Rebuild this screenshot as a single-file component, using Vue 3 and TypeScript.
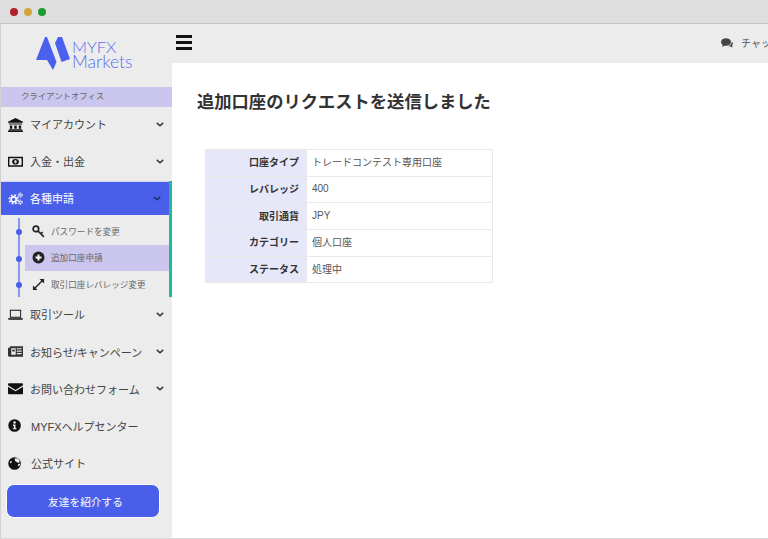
<script setup lang="ts">
interface MenuItem { label: string; icon: string; chevron: boolean; pad?: boolean }
const top: MenuItem[] = [
  { label: 'マイアカウント', icon: 'bank', chevron: true },
  { label: '入金・出金', icon: 'money', chevron: true },
]
const bottom: MenuItem[] = [
  { label: '取引ツール', icon: 'laptop', chevron: true },
  { label: 'お知らせ/キャンペーン', icon: 'news', chevron: true },
  { label: 'お問い合わせフォーム', icon: 'mail', chevron: true },
  { label: 'MYFXヘルプセンター', icon: 'info', chevron: false, pad: true },
  { label: '公式サイト', icon: 'globe', chevron: false, pad: true },
]
const subs = [
  { label: 'パスワードを変更', icon: 'key', active: false },
  { label: '追加口座申請', icon: 'plus', active: true },
  { label: '取引口座レバレッジ変更', icon: 'expand', active: false },
]
const rows = [
  ['口座タイプ', 'トレードコンテスト専用口座'],
  ['レバレッジ', '400'],
  ['取引通貨', 'JPY'],
  ['カテゴリー', '個人口座'],
  ['ステータス', '処理中'],
]
</script>

<template>
  <div class="window">
    <header class="chrome">
      <span class="dot red"></span><span class="dot yellow"></span><span class="dot green"></span>
    </header>
    <div class="body">
      <aside class="side">
        <div class="logo">
          <svg class="mark" width="34" height="35" viewBox="0 0 34 35">
            <path d="M9 1 L11 1 L20.5 26 L17 34 L11 24 L0 24 Z" fill="#4a61ee"/>
            <path d="M22 1 L26 1 L34 23 L25.5 26 L19 7 Z" fill="#4a61ee"/>
          </svg>
          <div class="brand"><span class="b1">MYFX</span><span class="b2">Markets</span></div>
        </div>
        <div class="office">クライアントオフィス</div>
        <nav class="menu">
          <template v-for="m in top" :key="m.label">
            <a class="item">
              <svg class="ic" viewBox="0 0 16 16">
                <template v-if="m.icon === 'bank'">
                  <path d="M8 1 L16 5 V6 H0 V5 Z M1 7 H15 V8 H1 Z M2 9 H4.5 V12.5 H2 Z M6.7 9 H9.3 V12.5 H6.7 Z M11.5 9 H14 V12.5 H11.5 Z M1 13 H15 V14 H1 Z M0 14.5 H16 V16 H0 Z" fill="#111"/>
                </template>
                <template v-else>
                  <path fill-rule="evenodd" d="M0 3 H16 V13.5 H0 Z M1.5 4.5 V12 H14.5 V4.5 Z" fill="#111"/>
                  <ellipse cx="8" cy="8.25" rx="3.6" ry="3" fill="#111"/>
                  <ellipse cx="8" cy="8.25" rx="1.3" ry="1.8" fill="#ddd"/>
                </template>
              </svg>
              <span class="label">{{ m.label }}</span>
              <svg class="chev" viewBox="0 0 10 6"><path d="M1 1 L5 4.6 L9 1" fill="none" stroke="#333" stroke-width="1.8"/></svg>
            </a>
          </template>

          <div class="group">
            <a class="item current">
              <svg class="ic" viewBox="0 0 16 16">
                <circle cx="6" cy="9" r="2.7" fill="none" stroke="#fff" stroke-width="1.8"/>
                <circle cx="6" cy="9" r="4.7" fill="none" stroke="#fff" stroke-width="1.6" stroke-dasharray="1.9 1.8"/>
                <circle cx="13" cy="4.4" r="1.3" fill="none" stroke="#fff" stroke-width="1"/>
                <circle cx="13" cy="4.4" r="2.4" fill="none" stroke="#fff" stroke-width="1" stroke-dasharray="1.2 1.2"/>
                <circle cx="13" cy="12" r="1.3" fill="none" stroke="#fff" stroke-width="1"/>
                <circle cx="13" cy="12" r="2.4" fill="none" stroke="#fff" stroke-width="1" stroke-dasharray="1.2 1.2"/>
              </svg>
              <span class="label">各種申請</span>
              <svg class="chev" viewBox="0 0 10 6"><path d="M1 1 L5 4.6 L9 1" fill="none" stroke="#1c2a6e" stroke-width="1.8"/></svg>
            </a>
            <ul class="subs">
              <li v-for="s in subs" :key="s.label" class="sub" :class="{ on: s.active }">
                <i class="bullet"></i>
                <svg class="sic" viewBox="0 0 14 14">
                  <template v-if="s.icon === 'key'">
                    <circle cx="4.2" cy="4.2" r="3" fill="none" stroke="#222" stroke-width="1.8"/>
                    <path d="M6.2 6.2 L12.8 12.8 M9.4 9.4 L11.6 7.6" stroke="#222" stroke-width="1.7" fill="none"/>
                  </template>
                  <template v-else-if="s.icon === 'plus'">
                    <circle cx="7" cy="7" r="6.4" fill="#222"/>
                    <path d="M7 3.8 V10.2 M3.8 7 H10.2" stroke="#fff" stroke-width="2"/>
                  </template>
                  <template v-else>
                    <path d="M3 11 L11 3" stroke="#222" stroke-width="1.5"/>
                    <path d="M8 1 H13 V6 Z M1 8 V13 H6 Z" fill="#222"/>
                  </template>
                </svg>
                <span>{{ s.label }}</span>
              </li>
            </ul>
          </div>

          <a v-for="m in bottom" :key="m.label" class="item" :class="{ wide: m.pad }">
            <svg class="ic" viewBox="0 0 16 16">
              <template v-if="m.icon === 'laptop'">
                <path fill-rule="evenodd" d="M2 3 H14 V11.4 H2 Z M3 4 V10.4 H13 V4 Z" fill="#111"/>
                <path d="M0 12 H16 V12.8 L15 13.6 H1 L0 12.8 Z" fill="#111"/>
              </template>
              <template v-else-if="m.icon === 'news'">
                <path fill-rule="evenodd" d="M0 4 H2 V2.5 H16 V13.5 H1 L0 12.5 Z M3.5 4.5 V11.5 H8.2 V4.5 Z M9.4 4.5 V5.7 H14.5 V4.5 Z M9.4 7 V8.2 H14.5 V7 Z M9.4 9.6 V10.8 H14.5 V9.6 Z" fill="#333"/>
                <path d="M4.6 6 H7.2 V8 H4.6 Z" fill="#333"/>
              </template>
              <template v-else-if="m.icon === 'mail'">
                <path d="M0 3.5 A1 1 0 0 1 1 2.5 H15 A1 1 0 0 1 16 3.5 V4.5 L8 9.5 L0 4.5 Z M0 6 L8 11 L16 6 V13 A1 1 0 0 1 15 14 H1 A1 1 0 0 1 0 13 Z" fill="#111"/>
              </template>
              <template v-else-if="m.icon === 'info'">
                <circle cx="7" cy="8" r="6.7" fill="#111"/>
                <path d="M5.2 7 H8 V10.8 H9 V12 H5.2 V10.8 H6.2 V8.2 H5.2 Z" fill="#eee"/>
                <circle cx="7" cy="4.8" r="1.3" fill="#eee"/>
              </template>
              <template v-else>
                <circle cx="7" cy="8" r="6.7" fill="#111"/>
                <path d="M7 2.6 L10.5 2.4 L12.6 5 L11.5 7.5 L9 6.5 L7.5 5 Z M11 8.5 L13.2 8 L12 11 L10.5 10.5 Z M2 6 L3.5 5 L4 7 L2.6 8 Z" fill="#eee"/>
              </template>
            </svg>
            <span class="label">{{ m.label }}</span>
            <svg v-if="m.chevron" class="chev" viewBox="0 0 10 6"><path d="M1 1 L5 4.6 L9 1" fill="none" stroke="#333" stroke-width="1.8"/></svg>
          </a>
        </nav>
        <button class="invite" type="button">友達を紹介する</button>
      </aside>

      <div class="main">
        <div class="topbar">
          <div class="burger"><i></i><i></i><i></i></div>
          <div class="chat">
            <svg width="12" height="10" viewBox="0 0 12 10">
              <ellipse cx="5" cy="4" rx="5" ry="3.8" fill="#444"/>
              <path d="M2 6 L1 9 L5 7 Z" fill="#444"/>
              <path d="M10.8 3.5 C12.5 5 12 7 11 7.6 L11.6 9.6 L8.6 8.3 L6.5 8.3 C9 8 11 6 10.8 3.5 Z" fill="#444"/>
            </svg>
            <span>チャット</span>
          </div>
        </div>
        <main class="content">
          <h1>追加口座のリクエストを送信しました</h1>
          <table>
            <tbody>
              <tr v-for="r in rows" :key="r[0]">
                <th>{{ r[0] }}</th>
                <td>{{ r[1] }}</td>
              </tr>
            </tbody>
          </table>
        </main>
      </div>
    </div>
  </div>
</template>

<style scoped>
.window {
  width: 768px;
  height: 539px;
  overflow: hidden;
  display: flex;
  flex-direction: column;
  font-family: "Liberation Sans", "Noto Sans CJK JP", sans-serif;
  color: #333;
  background: #fff;
}
.chrome {
  height: 23px;
  flex: none;
  background: #dfdfdf;
  border-bottom: 1px solid #c4c4c4;
  display: flex;
  align-items: center;
  gap: 6px;
  padding: 0 0 0 10px;
}
.dot { width: 8px; height: 8px; border-radius: 50%; }
.red { background: #b3202a; }
.yellow { background: #d0a63c; }
.green { background: #1d9a33; }
.body { flex: 1; display: flex; min-height: 0; border-left: 1px solid #d2d2d2; border-bottom: 1px solid #d8d8d8; }
.side { width: 171px; flex: none; background: #ececec; display: flex; flex-direction: column; }
.logo { height: 63px; display: flex; align-items: flex-start; gap: 2px; padding: 12px 0 0 35px; box-sizing: border-box; }
.mark { flex: none; }
.brand { display: flex; flex-direction: column; gap: 1px; padding-top: 4px; color: #5a6fef; font-family: Lato, "Liberation Sans", sans-serif; font-weight: 300; line-height: 14px; }
.b1 { font-size: 16.5px; }
.b2 { font-size: 17.5px; }
.office { height: 20px; background: #cbc6ee; font-size: 8.4px; line-height: 18px; padding-left: 20px; color: #666; }
.menu { display: flex; flex-direction: column; }
.item { height: 37.2px; display: flex; align-items: center; padding: 0 8px 3px 7px; font-size: 11px; color: #444; box-sizing: border-box; }
.item.wide .label { margin-left: 1px; }
.ic { width: 15px; height: 15px; flex: none; margin-right: 7px; }
.label { flex: 1; white-space: nowrap; }
.chev { width: 8px; height: 5px; flex: none; }
.group { border-right: 3px solid #1dbb9c; }
.current { background: #4a5fe9; color: #fff; height: 34px; border-top: 1px solid #cfd4f5; padding-bottom: 1px; }
.subs { list-style: none; margin: 0; padding: 3px 0 0 18px; position: relative; }
.subs::before { content: ""; position: absolute; left: 17px; top: 3px; bottom: 0; width: 2px; background: #8797f0; }
.sub { height: 26.3px; display: flex; align-items: center; padding-left: 13px; margin-left: 6px; font-size: 8.6px; color: #666; position: relative; white-space: nowrap; }
.sub span { margin-top: -1px; }
.sub.on { background: #cbc6ee; }
.bullet { position: absolute; left: -9px; top: 11px; width: 6px; height: 6px; border-radius: 50%; background: #4a5fe9; }
.sic { width: 13px; height: 13px; flex: none; margin: 0 6px 0 -6px; }
.invite { margin: 1px 12px 0 5px; height: 34px; border: 1px solid #fff; border-radius: 8px; background: #4a5fe9; color: #fff; font: inherit; font-size: 10.7px; padding: 0 0 0 5px; }
.main { flex: 1; min-width: 0; display: flex; flex-direction: column; }
.topbar { height: 39px; flex: none; background: #ececec; display: flex; align-items: center; padding-left: 4px; position: relative; }
.burger { display: flex; flex-direction: column; gap: 3px; margin-bottom: 3px; }
.burger i { display: block; width: 16px; height: 3px; background: #111; }
.chat { position: absolute; left: 549px; top: 11px; display: flex; align-items: center; gap: 8px; font-size: 10px; color: #555; white-space: nowrap; }
.content { flex: 1; padding: 27px 0 0 25px; }
h1 { margin: 0; font-size: 17.3px; line-height: 24px; font-weight: 700; color: #333; }
table { border-collapse: collapse; margin: 35px 0 0 8px; width: 288px; font-size: 10px; }
th, td { height: 26.67px; border: 1px solid #e8e8e8; padding: 0 5px 2px; box-sizing: border-box; }
th { width: 101px; background: #e6e7f9; text-align: right; font-weight: 700; color: #333; padding-right: 7px; }
td { color: #555; }
</style>
